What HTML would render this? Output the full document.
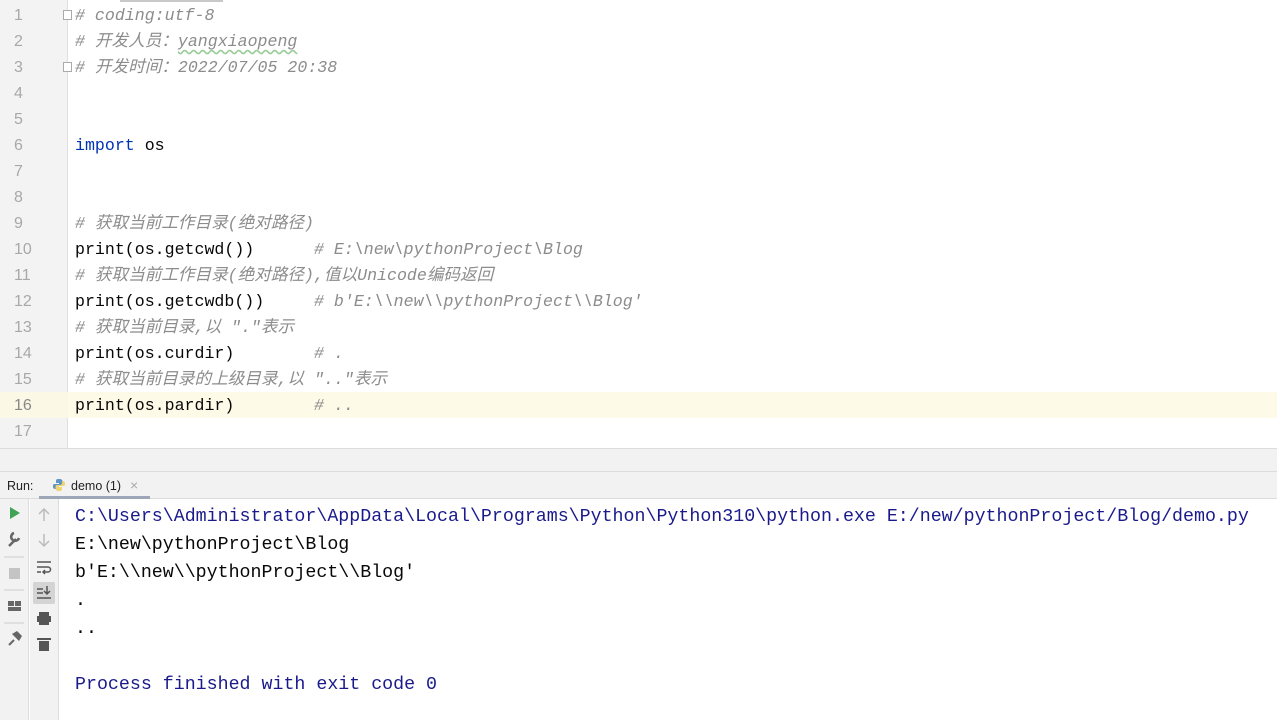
<!DOCTYPE html>
<html><head><meta charset="utf-8"><style>
*{margin:0;padding:0;box-sizing:border-box}
body{width:1277px;height:720px;overflow:hidden;background:#fff;position:relative;font-family:"Liberation Mono","Noto Sans CJK SC",monospace}
.gut{position:absolute;left:0;top:0;width:68px;height:448px;background:#f3f3f3;border-right:1px solid #e0e0e0}
.ln{position:absolute;left:0;width:60px;padding-left:14px;color:#a8a8a8;font-size:16px;font-family:"Liberation Sans",sans-serif;height:26px;line-height:26px}
.code{position:absolute;left:75px;height:26px;line-height:26px;font-size:16.6px;white-space:pre;color:#080808}
.c{color:#8c8c8c;font-style:italic}
.k{color:#0033b3}
.z{font-style:italic}
.hl{position:absolute;left:0;top:392px;width:1277px;height:26px;background:#fefae8}
.con{position:absolute;left:75px;font-size:18.3px;white-space:pre;height:28px;line-height:28px;color:#080808}
</style></head><body>
<div class="hl"></div>
<div class="gut"></div>
<div style="position:absolute;left:0;top:392px;width:68px;height:26px;background:#fcf8e6"></div>
<div style="position:absolute;left:120px;top:0;width:103px;height:2px;background:#c8c8c8"></div>
<div class="ln" style="top:3px">1</div><div class="ln" style="top:29px">2</div><div class="ln" style="top:55px">3</div><div class="ln" style="top:81px">4</div><div class="ln" style="top:107px">5</div><div class="ln" style="top:133px">6</div><div class="ln" style="top:159px">7</div><div class="ln" style="top:185px">8</div><div class="ln" style="top:211px">9</div><div class="ln" style="top:237px">10</div><div class="ln" style="top:263px">11</div><div class="ln" style="top:289px">12</div><div class="ln" style="top:315px">13</div><div class="ln" style="top:341px">14</div><div class="ln" style="top:367px">15</div><div class="ln" style="top:393px;color:#888">16</div><div class="ln" style="top:419px">17</div>
<div style="position:absolute;left:63px;top:10px;width:9px;height:10px;border:1px solid #aaa;background:#fff"></div>
<div style="position:absolute;left:63px;top:62px;width:9px;height:10px;border:1px solid #aaa;background:#fff"></div>
<div class="code c" style="top:3px"># coding:utf-8</div>
<div class="code c" style="top:29px"># <span class="z">开发人员：</span><span style="text-decoration:underline wavy #9c9;text-underline-offset:3px">yangxiaopeng</span></div>
<div class="code c" style="top:55px"># <span class="z">开发时间：</span>2022/07/05 20:38</div>
<div class="code" style="top:133px"><span class="k">import</span> os</div>
<div class="code c" style="top:211px"># <span class="z">获取当前工作目录</span>(<span class="z">绝对路径</span>)</div>
<div class="code" style="top:237px">print(os.getcwd())      <span class="c"># E:\new\pythonProject\Blog</span></div>
<div class="code c" style="top:263px"># <span class="z">获取当前工作目录</span>(<span class="z">绝对路径</span>),<span class="z">值以</span>Unicode<span class="z">编码返回</span></div>
<div class="code" style="top:289px">print(os.getcwdb())     <span class="c"># b'E:\\new\\pythonProject\\Blog'</span></div>
<div class="code c" style="top:315px"># <span class="z">获取当前目录</span>,<span class="z">以</span> "."<span class="z">表示</span></div>
<div class="code" style="top:341px">print(os.curdir)        <span class="c"># .</span></div>
<div class="code c" style="top:367px"># <span class="z">获取当前目录的上级目录</span>,<span class="z">以</span> ".."<span class="z">表示</span></div>
<div class="code" style="top:393px">print(os.pardir)        <span class="c"># ..</span></div>
<div style="position:absolute;left:0;top:448px;width:1277px;height:24px;background:#f2f2f2;border-top:1px solid #dcdcdc;border-bottom:1px solid #dcdcdc"></div>
<div style="position:absolute;left:0;top:472px;width:1277px;height:27px;background:#f2f2f2;border-bottom:1px solid #dcdcdc;font-family:'Liberation Sans',sans-serif;font-size:12.5px;color:#222">
<span style="position:absolute;left:7px;top:7px">Run:</span>
<svg style="position:absolute;left:52px;top:6px" width="14" height="14" viewBox="0 0 14 14"><path d="M7 1C4 1 4 2 4 3v2h3v1H2.5C1 6 1 7.5 1 8.5S1.5 11 3 11h1V9c0-1 1-2 2-2h3c1 0 1.5-.5 1.5-1.5V3C10.5 2 9.5 1 7 1z" fill="#5b95c9"/><path d="M7 13c3 0 3-1 3-2V9H7V8h4.5C13 8 13 6.5 13 5.5S12.5 3 11 3h-1v2c0 1-1 2-2 2H5c-1 0-1.5.5-1.5 1.5V11c0 1 1 2 3.5 2z" fill="#f0d064" opacity=".9"/></svg>
<span style="position:absolute;left:71px;top:7px">demo (1)</span>
<span style="position:absolute;left:130px;top:5px;color:#aaa;font-size:14px">×</span>
<div style="position:absolute;left:39px;top:24px;width:111px;height:3px;background:#9ea7b8"></div>
</div>
<div style="position:absolute;left:0;top:499px;width:29px;height:221px;background:#f2f2f2;border-right:1px solid #dcdcdc"></div>
<div style="position:absolute;left:30px;top:499px;width:29px;height:221px;background:#f2f2f2;border-right:1px solid #dcdcdc"></div>
<svg style="position:absolute;left:0;top:499px" width="60" height="221">
<path d="M10 8v12l10-6z" fill="#40a355"/>
<path d="M9 47l7-7M14 34a4 4 0 1 0 5 5" stroke="#666" stroke-width="2.5" fill="none"/>
<line x1="4" y1="58" x2="24" y2="58" stroke="#ccc"/>
<rect x="9" y="69" width="11" height="11" fill="#c4c4c4"/>
<line x1="4" y1="91" x2="24" y2="91" stroke="#ccc"/>
<rect x="8" y="102" width="6" height="5" fill="#666"/><rect x="15" y="102" width="6" height="5" fill="#666"/><rect x="8" y="108" width="13" height="4" fill="#666"/>
<line x1="4" y1="124" x2="24" y2="124" stroke="#ccc"/>
<path d="M9 146l5-5" stroke="#666" stroke-width="2"/><path d="M12 135l5-3 5 5-3 5z" fill="#666"/>
<path d="M44 22v-12M39 15l5-5 5 5" stroke="#bbb" stroke-width="1.5" fill="none"/>
<path d="M44 35v12M39 42l5 5 5-5" stroke="#bbb" stroke-width="1.5" fill="none"/>
<path d="M37 63h14M37 68h11a2.5 2.5 0 0 1 0 5h-4M37 73h4M45 71l-2 2 2 2" stroke="#555" stroke-width="1.5" fill="none"/>
<rect x="33" y="83" width="22" height="22" rx="2" fill="#d4d4d4"/>
<path d="M37 90h6M37 94h6M37 99h14M47 87v8M44 92l3 3 3-3" stroke="#555" stroke-width="1.5" fill="none"/>
<rect x="39" y="113" width="10" height="4" fill="#555"/><rect x="37" y="117" width="14" height="6" fill="#555"/><rect x="39" y="122" width="10" height="4" fill="#555"/>
<rect x="37" y="139" width="14" height="2" fill="#555"/><rect x="39" y="142" width="10" height="10" fill="#555"/>
</svg>
<div class="con" style="top:503px;color:#1a1a8c">C:\Users\Administrator\AppData\Local\Programs\Python\Python310\python.exe E:/new/pythonProject/Blog/demo.py</div>
<div class="con" style="top:531px">E:\new\pythonProject\Blog</div>
<div class="con" style="top:559px">b'E:\\new\\pythonProject\\Blog'</div>
<div class="con" style="top:587px">.</div>
<div class="con" style="top:615px">..</div>
<div class="con" style="top:671px;color:#1a1a8c">Process finished with exit code 0</div>
</body></html>
